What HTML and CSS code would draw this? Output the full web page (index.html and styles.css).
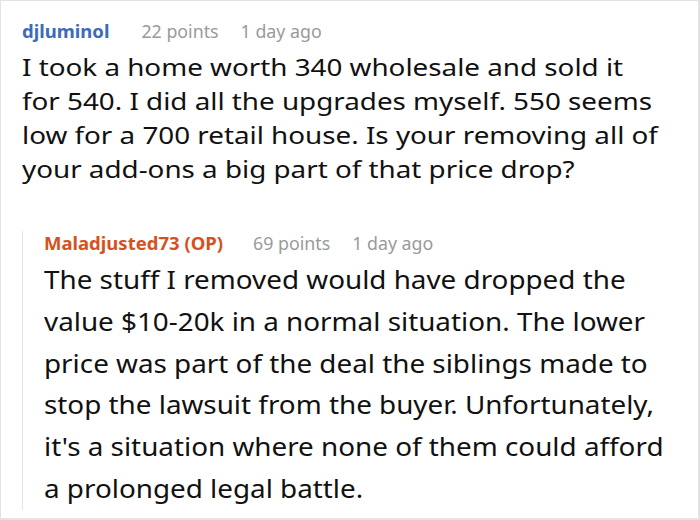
FILE: index.html
```html
<!DOCTYPE html>
<html>
<head>
<meta charset="utf-8">
<link rel="stylesheet" href="styles.css">
</head>
<body>
<div class="frame">
  <div class="comment">
    <div class="meta">
      <span class="author">djluminol</span>
      <span class="info">22 points</span>
      <span class="info">1 day ago</span>
    </div>
    <div class="text">
      <div class="stretch main-stretch">I took a home worth 340 wholesale and sold it for 540. I did all the upgrades myself. 550 seems low for a 700 retail house. Is your removing all of your add-ons a big part of that price drop?</div>
    </div>
    <div class="reply">
      <div class="meta">
        <span class="author op">Maladjusted73 (OP)</span>
        <span class="info">69 points</span>
        <span class="info">1 day ago</span>
      </div>
      <div class="text reply-text">
        <div class="stretch reply-stretch">The stuff I removed would have dropped the value $10-20k in a normal situation. The lower price was part of the deal the siblings made to stop the lawsuit from the buyer. Unfortunately, it's a situation where none of them could afford a prolonged legal battle.</div>
      </div>
    </div>
  </div>
</div>
</body>
</html>
```

FILE: styles.css
```css
html, body {
  margin: 0;
  padding: 0;
  background: #ffffff;
}

.frame {
  box-sizing: border-box;
  width: 700px;
  height: 520px;
  border: 1px solid #e3e3e3;
  border-right-width: 2px;
  border-bottom-width: 2px;
  padding: 18px 0 0 21px;
  font-family: "Noto Sans", "Open Sans", sans-serif;
  color: #111111;
  overflow: hidden;
}

.meta {
  display: flex;
  align-items: baseline;
  gap: 22px;
  line-height: 24px;
  white-space: nowrap;
}

.author {
  font-size: 18.5px;
  font-weight: 700;
  color: #3b6cb7;
  margin-right: 10px;
}

.author.op {
  color: #d6521d;
  margin-right: 8px;
}

.info {
  font-size: 17.8px;
  color: #9a9a9a;
}

.text {
  margin-top: 7px;
  font-size: 24px;
  line-height: 34px;
}

.stretch {
  transform-origin: 0 0;
}

.main-stretch {
  width: 551px;
  transform: scaleX(1.158);
}

.reply {
  margin-top: 54px;
  border-left: 1px solid #e6e6e6;
  padding-left: 21px;
}

.reply .meta {
  margin-top: -9px;
}

.reply-text {
  margin-top: 4px;
  margin-bottom: -7px;
  font-size: 26px;
  line-height: 41.8px;
}

.reply-stretch {
  width: 592px;
  transform: scaleX(1.07);
}
```
